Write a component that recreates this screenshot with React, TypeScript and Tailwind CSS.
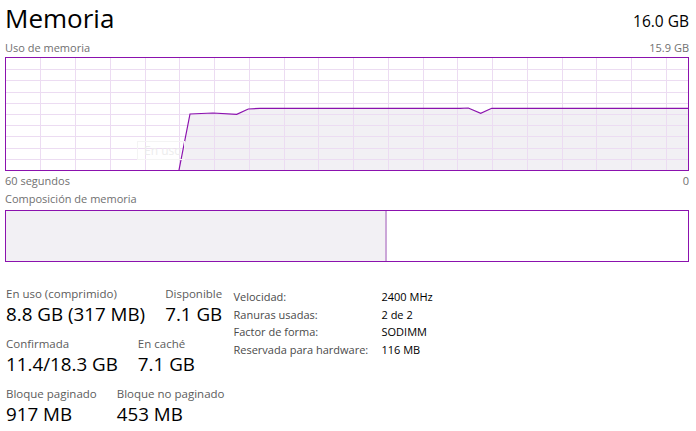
import React from "react";

const usage: [number, number][] = [
  [173, 112], [184, 56], [207, 55], [230.7, 56.3], [242.3, 51], [254, 50.3],
  [454, 50.3], [462.3, 50], [474.7, 55.3], [485.7, 50.3], [682, 50.3],
];

function UsageGraph() {
  const w = 682;
  const h = 112;
  const line = usage.map(([x, y]) => `${x},${y}`).join(" ");
  const area = `${line} ${w},${h} 173,${h}`;
  return (
    <div className="relative h-[114px] border border-[#8b12ae]">
      <svg width={w} height={h} className="block">
        <polygon points={area} fill="#f2f0f4" />
        {Array.from({ length: 19 }, (_, i) => {
          const x = Math.round(34.3 + i * 34.75) + 0.5;
          return <line key={"v" + i} x1={x} y1={0} x2={x} y2={h} stroke="#ecdcf2" strokeWidth={1} />;
        })}
        {Array.from({ length: 9 }, (_, i) => {
          const y = Math.round(11.2 * (i + 1)) + 0.5;
          return <line key={"h" + i} x1={0} y1={y} x2={w} y2={y} stroke="#ecdcf2" strokeWidth={1} />;
        })}
        <polyline points={line} fill="none" stroke="#8b12ae" strokeWidth={1.2} />
      </svg>
      <div className="absolute left-[131px] top-[83px] w-[48px] h-[19px] pl-[6px] border border-[#f4f4f4] text-[12px] leading-[17px] text-[#ededed]">
        En uso
      </div>
    </div>
  );
}

function Stat({ label, value }: { label: string; value: string }) {
  return (
    <div className="flex flex-col">
      <span className="text-[11.5px] leading-[16px] text-[#5c5c5c]">{label}</span>
      <span className="text-[18.8px] leading-[24px] text-black">{value}</span>
    </div>
  );
}

const specs = [
  ["Velocidad:", "2400 MHz"],
  ["Ranuras usadas:", "2 de 2"],
  ["Factor de forma:", "SODIMM"],
  ["Reservada para hardware:", "116 MB"],
];

export default function App() {
  return (
    <div className="w-[696px] h-[431px] bg-white pl-[5px] pr-[7px] font-['Segoe_UI','Open_Sans',sans-serif] overflow-hidden">
      <div className="flex justify-between items-end h-[36px]">
        <span className="text-[26px] leading-[36px] text-black">Memoria</span>
        <span className="text-[15.5px] leading-[22px] text-black mb-[4px]">16.0 GB</span>
      </div>
      <div className="flex justify-between text-[11px] leading-[16px] text-[#707070] mt-[4px] mb-[1px]">
        <span>Uso de memoria</span>
        <span>15.9 GB</span>
      </div>
      <UsageGraph />
      <div className="flex justify-between text-[11px] leading-[16px] text-[#707070] mt-[2px]">
        <span>60 segundos</span>
        <span>0</span>
      </div>
      <div className="text-[11px] leading-[16px] text-[#707070] mt-[2px] mb-[3px]">Composición de memoria</div>
      <div className="flex h-[52px] border border-[#8b12ae]">
        <div className="w-[379px] bg-[#f2f0f4]" />
        <div className="w-[2px] bg-[#cba6d8]" />
        <div className="flex-1 bg-white" />
      </div>
      <div className="flex mt-[24px]">
        <div className="flex flex-col gap-[10px] pl-[1px]">
          <div className="flex gap-5">
            <Stat label="En uso (comprimido)" value="8.8 GB (317 MB)" />
            <Stat label="Disponible" value="7.1 GB" />
          </div>
          <div className="flex gap-5">
            <Stat label="Confirmada" value="11.4/18.3 GB" />
            <Stat label="En caché" value="7.1 GB" />
          </div>
          <div className="flex gap-5">
            <Stat label="Bloque paginado" value="917 MB" />
            <Stat label="Bloque no paginado" value="453 MB" />
          </div>
        </div>
        <div className="ml-[9px] mt-[2px] grid grid-cols-[148px_auto] auto-rows-[17.5px] text-[11px] leading-[17px]">
          {specs.map(([k, v]) => (
            <React.Fragment key={k}>
              <span className="text-[#4a4a4a]">{k}</span>
              <span className="text-black">{v}</span>
            </React.Fragment>
          ))}
        </div>
      </div>
    </div>
  );
}
